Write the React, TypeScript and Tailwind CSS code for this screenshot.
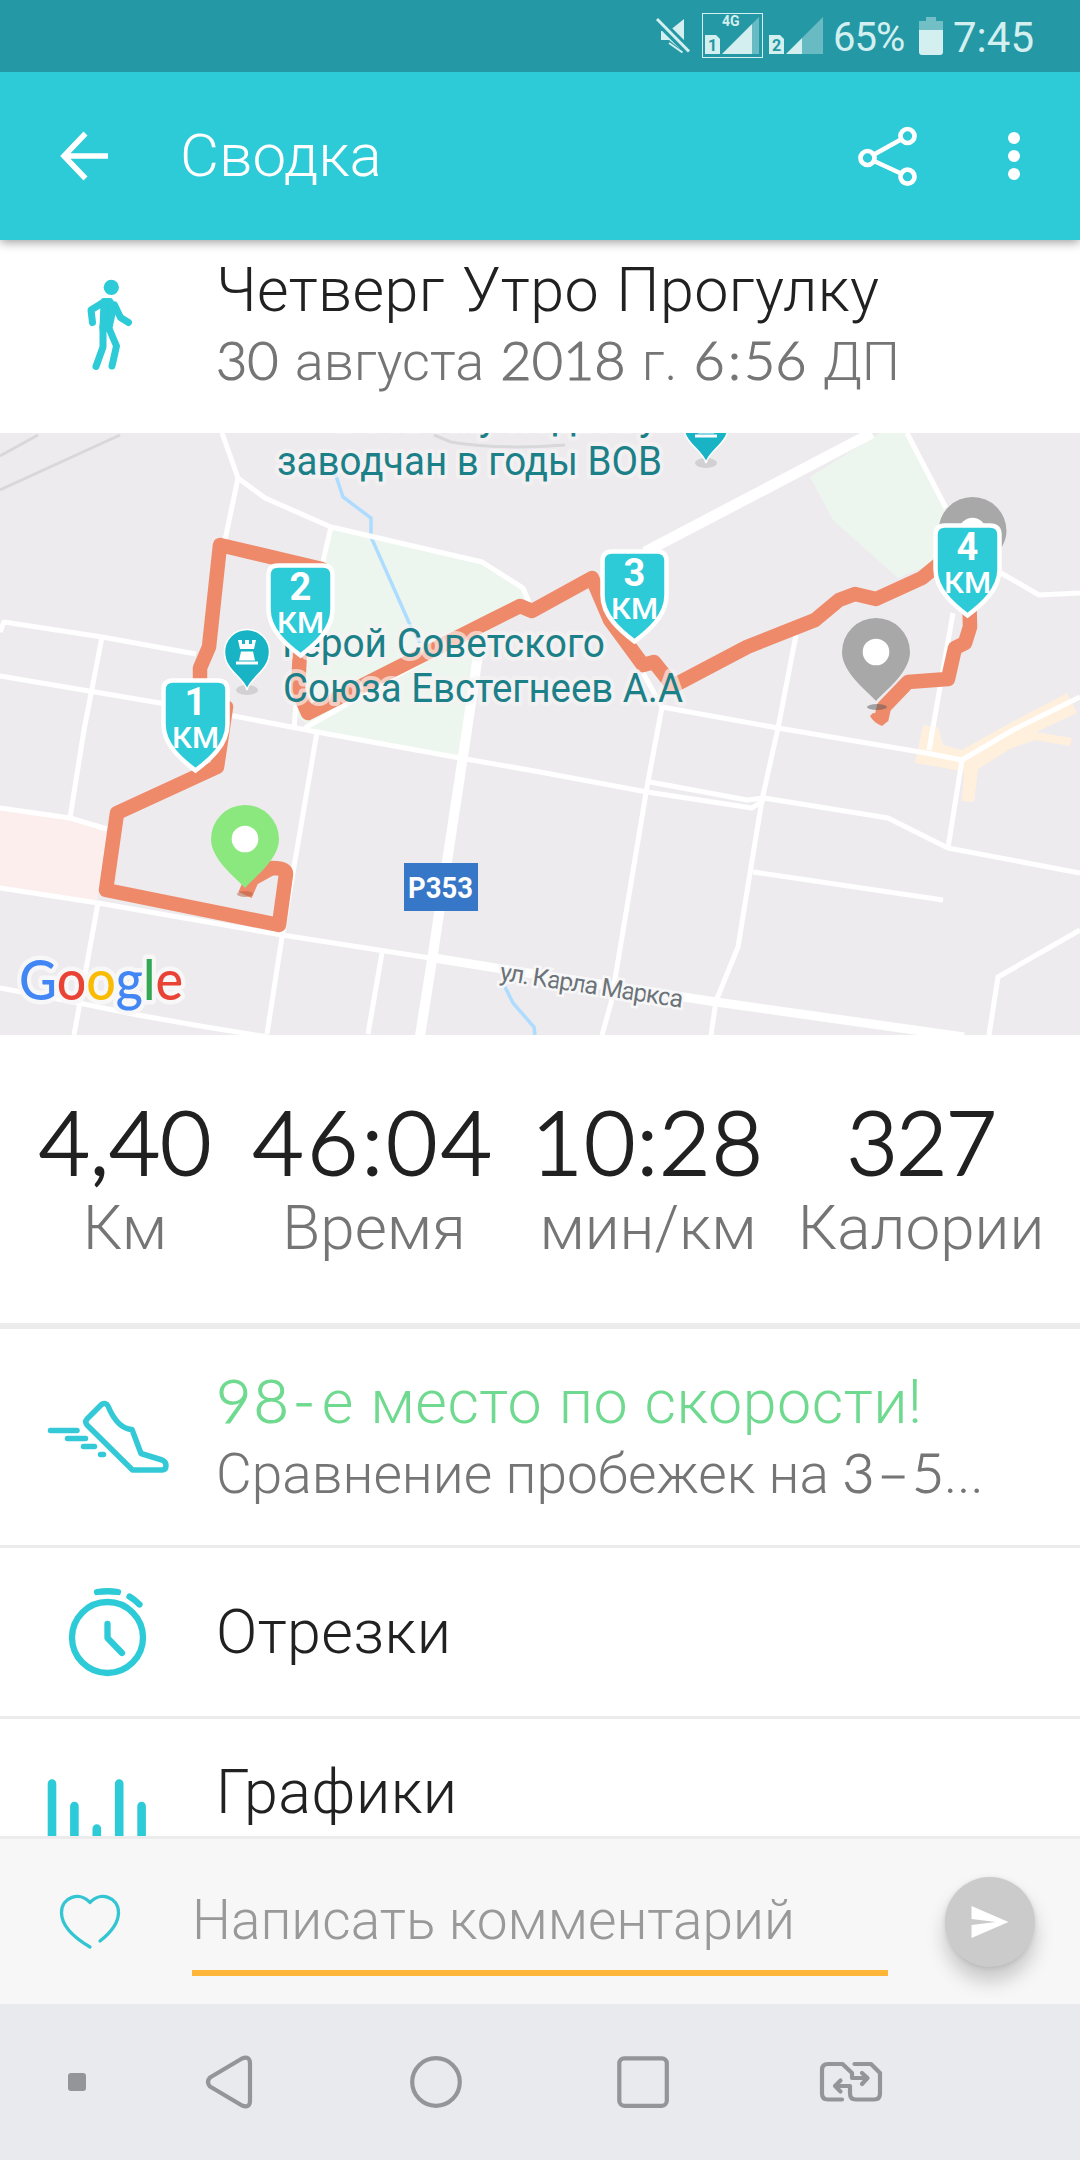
import type { ReactNode } from 'react';

// Latin digits use a rounder face than the Cyrillic copy
function Num({ children }: { children: ReactNode }) {
  return (
    <span className="font-[Lato,sans-serif] leading-none [-webkit-text-stroke:1.1px_currentColor]">{children}</span>
  );
}

function StatusBar() {
  return (
    <div className="relative z-20 flex h-[72px] items-center bg-[#2498a5] pl-[655px] text-[#d3efef]">
      <svg width="170" height="72" viewBox="655 0 170 72" className="shrink-0" fill="#d3efef">
        <path d="M661 31h8l15-12v33l-15-12h-8z" />
        <path d="M654 16.500l35 35" stroke="#2498a5" strokeWidth="9" />
        <path d="M657 19l32 32.500" stroke="#d3efef" strokeWidth="3" />
        <path d="M669 43l13.500 9.500" stroke="#d3efef" strokeWidth="2" />
        <rect x="702.500" y="13.500" width="60" height="44" fill="none" stroke="#d3efef" />
        <text x="722" y="26" fontSize="14" fontWeight="700" fontFamily="Roboto, sans-serif">4G</text>
        <path d="M705 35h11l4 4v15h-15zM722 54l30-30v30z" />
        <path d="M752 24l7-7v37h-7z" opacity=".4" />
        <text x="708" y="51" fontSize="16" fontWeight="700" fontFamily="Roboto, sans-serif" fill="#2498a5">1</text>
        <path d="M769 35h11l4 4v15h-15zM786 54l16-16v16z" />
        <path d="M802 38l21-21v37h-21z" opacity=".4" />
        <text x="772" y="51" fontSize="16" fontWeight="700" fontFamily="Roboto, sans-serif" fill="#2498a5">2</text>
      </svg>
      <span className="ml-2 w-[78px] pt-[3px] text-[40px] leading-[72px] tracking-[-1px]">65%</span>
      <svg width="36" height="72" viewBox="911 0 36 72" className="shrink-0" fill="#d3efef">
        <path d="M926 17h10v4h7v9h-24v-9h7z" opacity=".45" />
        <path d="M919 30h24v22q0 3-3 3h-18q-3 0-3-3z" />
      </svg>
      <span className="ml-1.5 pt-[3px] text-[42px] leading-[72px]">7:45</span>
    </div>
  );
}

function AppBar() {
  return (
    <div className="relative z-10 flex h-[168px] items-center bg-[#2dcad7] text-white shadow-[0_2px_10px_rgba(0,0,0,0.4)]">
      <svg width="60" height="60" viewBox="55 126 60 60" className="ml-[55px] shrink-0" fill="none" stroke="currentColor" strokeWidth="5.500">
        <path d="M85.500 133.500L64 156l21.500 22.500M64 156h44" />
      </svg>
      <h1 className="ml-[65px] flex-1 text-[60px] leading-[164px] font-light">Сводка</h1>
      <svg width="70" height="70" viewBox="852 121 70 70" className="mr-[80px]" fill="none" stroke="currentColor" strokeWidth="4.700">
        <circle cx="907.500" cy="136" r="7" />
        <circle cx="867.500" cy="158" r="7" />
        <circle cx="907.500" cy="176.700" r="7" />
        <path d="M874 154.500l27-15M874 161l27 12.500" strokeWidth="4.500" />
      </svg>
      <svg width="24" height="60" viewBox="0 0 24 60" className="mr-[54px]" fill="currentColor">
        <circle cx="12" cy="12" r="6" />
        <circle cx="12" cy="30" r="6" />
        <circle cx="12" cy="48" r="6" />
      </svg>
    </div>
  );
}

function WalkIcon() {
  return (
    <svg width="60" height="100" viewBox="80 275 60 100" fill="none" stroke="#2dcad7" strokeWidth="7" strokeLinecap="round" strokeLinejoin="round">
      <ellipse cx="111.300" cy="287.300" rx="7.600" ry="7.600" fill="#2dcad7" stroke="none" />
      <path d="M92.500 322.500L91 310l13-8M114.500 305l6 12.500 8 5M103 326v21l-7 19.500M108 326l8.500 20-4.500 20" />
      <path d="M104 301.500h6l3 8-4 18-6 1z" fill="#2dcad7" />
    </svg>
  );
}

function Pin({ x, y, color }: { x: number; y: number; color: string }) {
  return (
    <g transform={`translate(${x} ${y})`}>
      <path d="M0 83C-10 72-34 54-34 34a34 34 0 1 1 68 0c0 20-24 38-34 49z" fill={color} />
      <circle cx="0" cy="34" r="13.300" fill="#fff" />
    </g>
  );
}

function KmShield({ x, y, n }: { x: number; y: number; n: number }) {
  return (
    <g transform={`translate(${x} ${y})`} fill="#fff" fontFamily="Roboto, sans-serif" textAnchor="middle">
      <path d="M-32 12q0-9.500 9.500-9.500h45q9.500 0 9.500 9.500v34c0 21-18 36-32 46.500c-14-10.500-32-25.500-32-46.500z" fill="#2dcad7" stroke="#fff" strokeWidth="4.500" />
      <text y="36.500" fontSize="38" fontWeight="700">{n}</text>
      <text y="70" fontSize="29" fontWeight="500" textLength="47" lengthAdjust="spacingAndGlyphs">КМ</text>
    </g>
  );
}

function PoiPin({ x, y }: { x: number; y: number }) {
  return (
    <g transform={`translate(${x} ${y})`}>
      <ellipse cx="0" cy="60" rx="11" ry="5" fill="#d2d0d3" />
      <path d="M0 60C-3 47-22.500 41-22.500 22a22.500 22.500 0 1 1 45 0c0 19-19.500 25-22.500 38z" fill="#19b3c6" stroke="#fff" strokeWidth="1.500" />
      <path d="M-9 10h4v4h3v-4h4v4h3v-4h4l-2 9h-14zM-6 21.500h12l2 9h-16zM-11 31.500h22v3h-22z" fill="#fff" />
    </g>
  );
}

const roads = [
  'M222 433L238 478L225 540',
  'M238 478L265 498L331 527L482 562L523 588L529 602',
  'M331 527L324 557L318 600',
  'M0 632L4 622L102 637L196 654',
  'M102 637L84 730L70 818',
  'M0 676L160 703L234 716L317 732L460 758L540 772L647 792L752 808L764 800',
  'M650 782L747 800L764 798L888 818L948 848L1080 873',
  'M296 705L294 728M317 732L282 937L267 1034',
  'M0 808L70 818L107 829',
  'M0 888L98 903L282 935L430 958',
  'M98 903L74 1035',
  'M0 988L79 1003L138 1015L200 1026L268 1037',
  'M382 953L368 1034',
  'M643 673L662 707L647 787L611 1003L602 1035',
  'M796 635L778 728L762 800L750 873L738 947L716 1001L711 1035',
  'M662 707L778 728L926 753L962 760L1013 730L1080 697',
  'M953 613L929 750M962 760L948 848M753 872L943 900',
  'M1080 930L998 977L989 1035',
  'M907 433L946 508M1001 573L1039 595L1080 593',
  'M305 728L480 628L529 602',
];

const route =
  'M245 895L252 879L272 868Q286 868 286 874L279 925L106 890L117 813L217 767L226 707L200 690L200 668L209 647L220 545L322 569L300 650L298 690L308 713L492 620L520 606L532 611L592 578L610 620L643 665L654 662L673 686L747 647L815 620L839 600L855 594L876 599L922 578L968 540L970 627L965 643L955 648L948 679L908 682L884 707L881 720';

function RouteMap() {
  return (
    <svg width="1080" height="602" viewBox="0 433 1080 602" className="block bg-[#edebee]" fontFamily="Roboto, sans-serif">
      <g fill="#edf6ee">
        <path d="M332 528L482 562L523 588L529 602L477 640L470 680L460 757L317 732L295 715L318 600z" />
        <path d="M880 433h26l40 77-6 50-42 18-65-58-23-43z" />
      </g>
      <path d="M0 810L70 819L107 830L97 902L0 888z" fill="#fdeeee" />
      <path d="M923 725L938 727L943 745L962 750L1003 727L1067 693L1077 713L1036 732L1072 738L1070 746L1035 740L1010 749L978 769L974 802L962 801L964 772L945 768L915 763z" fill="#fff0de" />
      <path d="M0 456L38 435M0 490L120 435M434 435L451 442Q500 450 565 445" fill="none" stroke="#d8d8da" strokeWidth="3" />
      <path d="M334 470L343 497L371 518V537L411 627L420 643M504 985L513 1003L534 1027L535 1035" fill="none" stroke="#aedcff" strokeWidth="3.500" />
      <g fill="none" stroke="#fff" strokeLinejoin="round">
        {roads.map((d) => (
          <path key={d} d={d} strokeWidth="5" />
        ))}
        <path d="M478 655L467 730L432 960L420 1036" strokeWidth="10" />
        <path d="M434 958L540 975L716 1002L964 1037" strokeWidth="9" />
        <path d="M872 433L645 552" strokeWidth="11" />
      </g>
      <path d={route} fill="none" stroke="#ee8a6a" strokeWidth="14.500" strokeLinejoin="round" />
      <path d="M873 713l16 2-2 7-5 4q-8-3-12-10z" fill="#ee8a6a" />

      <PoiPin x={706} y={403} />
      <PoiPin x={247} y={630} />
      <g fill="#1c8088" stroke="#f8f4f5" strokeOpacity=".65" strokeWidth="8" strokeLinejoin="round" fontSize="40" className="[paint-order:stroke]">
        <text x="658" y="430" textAnchor="end">Боевому подвигу</text>
        <text x="277" y="475" textLength="385" lengthAdjust="spacingAndGlyphs">заводчан в годы ВОВ</text>
        <text x="282" y="657" textLength="323" lengthAdjust="spacingAndGlyphs">Герой Советского</text>
        <text x="283" y="702" textLength="400" lengthAdjust="spacingAndGlyphs">Союза Евстегнеев А.А</text>
      </g>
      <rect x="404" y="863" width="74" height="48" fill="#3777c7" />
      <text x="408" y="898" fontSize="29" fontWeight="700" fill="#fff" textLength="65" lengthAdjust="spacingAndGlyphs">P353</text>
      <text transform="translate(499 980) rotate(8.600)" fontSize="25" fill="#6b7378" stroke="#f8f7f8" strokeWidth="5" textLength="185" className="[paint-order:stroke]">ул. Карла Маркса</text>

      <ellipse cx="877" cy="707" rx="10" ry="3" fill="#555" opacity=".5" />
      <ellipse cx="245" cy="894" rx="8" ry="3" fill="#b35c40" opacity=".5" />
      <Pin x={972.500} y={497} color="#a8a8a8" />
      <Pin x={876} y={618} color="#a8a8a8" />
      <Pin x={245} y={805} color="#8be87e" />
      <KmShield x={195.500} y={678} n={1} />
      <KmShield x={300.500} y={563} n={2} />
      <KmShield x={634.500} y={549} n={3} />
      <KmShield x={967.500} y={523} n={4} />

      <text x="19" y="1000" fontFamily="Lato, sans-serif" fontSize="56" fontWeight="500" textLength="164" lengthAdjust="spacingAndGlyphs" stroke="#f8f7f8" strokeWidth="9" strokeLinejoin="round" className="[paint-order:stroke]">
        <tspan fill="#4285f4">G</tspan>
        <tspan fill="#e94335">o</tspan>
        <tspan fill="#fabb05">o</tspan>
        <tspan fill="#4285f4">g</tspan>
        <tspan fill="#34a853">l</tspan>
        <tspan fill="#e94335">e</tspan>
      </text>
    </svg>
  );
}

const stats = [
  { value: '4,40', label: 'Км', tracking: 'tracking-normal' },
  { value: '46:04', label: 'Время', tracking: 'tracking-[3.5px]' },
  { value: '10:28', label: 'мин/км', tracking: 'tracking-[1.5px]' },
  { value: '327', label: 'Калории', tracking: 'tracking-[-1.5px]' },
];

function Stats() {
  return (
    <div className="grid h-[294px] grid-cols-[250px_248px_300px_246px] border-b-[6px] border-[#ececec] pt-[66px]">
      {stats.map((s) => (
        <div key={s.label} className="flex flex-col items-center">
          <span className={`font-[Lato,sans-serif] text-[88px] leading-[80px] font-light [-webkit-text-stroke:2px_currentColor] ${s.tracking}`}>
            {s.value}
          </span>
          <span className="text-[62px] leading-[93px] font-light text-[#757575]">{s.label}</span>
        </div>
      ))}
    </div>
  );
}

function ShoeIcon() {
  return (
    <svg width="130" height="90" viewBox="42 1392 130 90" fill="none" stroke="#34c9d6" strokeWidth="5.500" strokeLinecap="round" strokeLinejoin="round">
      <path d="M101.500 1404.500L87 1419q-2.500 3 0 6L132.500 1470H162q4 0 4-4.500 0-4-4-5.500L141 1453.500 132 1429.500C120 1429 113 1418 108 1406q-2-4-6.500-1.500z" />
      <path d="M50.500 1430.500h26.500M67.500 1438.500h18M83.500 1446.500h11M100.500 1454.500h3" />
    </svg>
  );
}

function StopwatchIcon() {
  return (
    <svg width="90" height="100" viewBox="62 1582 90 100" fill="none" stroke="#2dcad7" strokeWidth="6.300" strokeLinecap="round" strokeLinejoin="round">
      <circle cx="107.500" cy="1637.500" r="35.500" />
      <path d="M107.500 1624v14l14.500 15M97 1592q10.500-1.500 21 0M129.500 1596.500q5 3 10 8" />
    </svg>
  );
}

function ChartIcon() {
  return (
    <svg width="110" height="120" viewBox="40 1719 110 120" fill="none" stroke="#2dcad7" strokeWidth="8.600" strokeLinecap="round">
      <path d="M52 1783.500v70M74.400 1806v50M96.800 1828.500v30M119.200 1783.500v70M141.600 1806v50" />
    </svg>
  );
}

function CommentBar() {
  return (
    <div className="flex h-[168px] border-t-[3px] border-[#ececec] bg-[#f7f7f7]">
      <svg width="70" height="70" viewBox="55 1887 70 70" className="mt-12 ml-[55px] shrink-0" fill="none" stroke="#34c5d3" strokeWidth="3.300" strokeLinecap="round" strokeLinejoin="round">
        <path d="M90 1947C78 1940 61.500 1928 61.500 1912.500C61.500 1897 80 1891 90 1902.500C100 1891 118.500 1897 118.500 1912.500C118.500 1925 109 1934 100 1941" />
      </svg>
      <div className="mt-[46px] ml-[67px] h-[91px] w-[696px] border-b-[6px] border-[#ffb638] text-[55px] leading-[71px] font-light whitespace-nowrap text-[#999]">
        Написать комментарий
      </div>
      <div className="mt-9.5 ml-[57px] flex size-[90px] items-center justify-center rounded-full bg-[#cbcbcb] shadow-[0_14px_20px_rgba(0,0,0,0.2),0_1px_5px_rgba(0,0,0,0.1)]">
        <svg width="38" height="34" viewBox="0 0 38 34" fill="#fff">
          <path d="M.5 1L37.500 17 .5 33V20L25 17 .5 14z" />
        </svg>
      </div>
    </div>
  );
}

function NavBar() {
  return (
    <div className="h-[156px] bg-[#e9eaed]">
      <svg width="1080" height="156" viewBox="0 2004 1080 156" fill="none" stroke="#949598" strokeWidth="4.200" strokeLinecap="round" strokeLinejoin="round">
        <rect x="68" y="2073" width="18" height="18" rx="3" fill="#949598" stroke="none" />
        <path d="M210 2077.500L242 2058.500Q250 2055.500 250 2063.500V2100.500Q250 2108.500 242 2105.500L210 2086.500Q206 2082 210 2077.500z" />
        <circle cx="436" cy="2082" r="23.800" />
        <rect x="619.300" y="2058.300" width="47.500" height="47.500" rx="5" />
        <path d="M842 2099.500H828Q822 2099.500 822 2093.500V2070Q822 2064 828 2064H842.500L852 2073V2078H866M862 2073L867.500 2078L862 2084" />
        <path d="M854.500 2064H871L880 2073V2093.500Q880 2099.500 874 2099.500H856Q850 2099.500 850 2093.500V2086H835M840.500 2080.500L835 2086L840.500 2091.500" />
      </svg>
    </div>
  );
}

export default function App() {
  return (
    <div className="flex h-[2160px] w-[1080px] flex-col overflow-hidden bg-white font-[Roboto,sans-serif] text-[#212121]">
      <StatusBar />
      <AppBar />

      <div className="flex h-[193px] pt-[15px] font-light whitespace-nowrap">
        <div className="w-[216px] shrink-0 pt-5 pl-20">
          <WalkIcon />
        </div>
        <div>
          <h2 className="h-[72px] text-[61px] leading-[71px] tracking-[0.4px] [word-spacing:2px]">Четверг Утро Прогулку</h2>
          <p className="h-[69px] text-[54px] leading-[69px] [word-spacing:3px] text-[#757575]">
            <Num>30</Num> августа <Num>2018</Num> г. <Num>6<span className="px-[3px]">:</span>56</Num> ДП
          </p>
        </div>
      </div>

      <RouteMap />
      <Stats />

      <div className="flex h-[219px] border-b-[3px] border-[#ececec] font-light whitespace-nowrap">
        <div className="w-[216px] shrink-0 pt-[63px] pl-[42px]">
          <ShoeIcon />
        </div>
        <div className="pt-[38px]">
          <h3 className="h-[71px] text-[61px] leading-[71px] tracking-[0.5px] [word-spacing:1px] text-[#6fda8f]">
            <Num><span className="tracking-[2px]">98</span><span className="pr-1.5 pl-0.5">-</span></Num>е место по скорости!
          </h3>
          <p className="h-[72px] text-[55px] leading-[72px] text-[#757575]">
            Сравнение пробежек на <Num>3<span className="px-[3px]">–</span>5</Num>...
          </p>
        </div>
      </div>

      <div className="flex h-[171px] items-center border-b-[3px] border-[#ececec]">
        <div className="w-[216px] shrink-0 pl-[62px]">
          <StopwatchIcon />
        </div>
        <h3 className="text-[61px] leading-[72px] font-light tracking-[0.4px]">Отрезки</h3>
      </div>

      <div className="flex h-[117px] overflow-hidden">
        <div className="w-[216px] shrink-0 pl-10">
          <ChartIcon />
        </div>
        <h3 className="text-[61px] leading-[147px] font-light tracking-[0.4px]">Графики</h3>
      </div>

      <CommentBar />
      <NavBar />
    </div>
  );
}
